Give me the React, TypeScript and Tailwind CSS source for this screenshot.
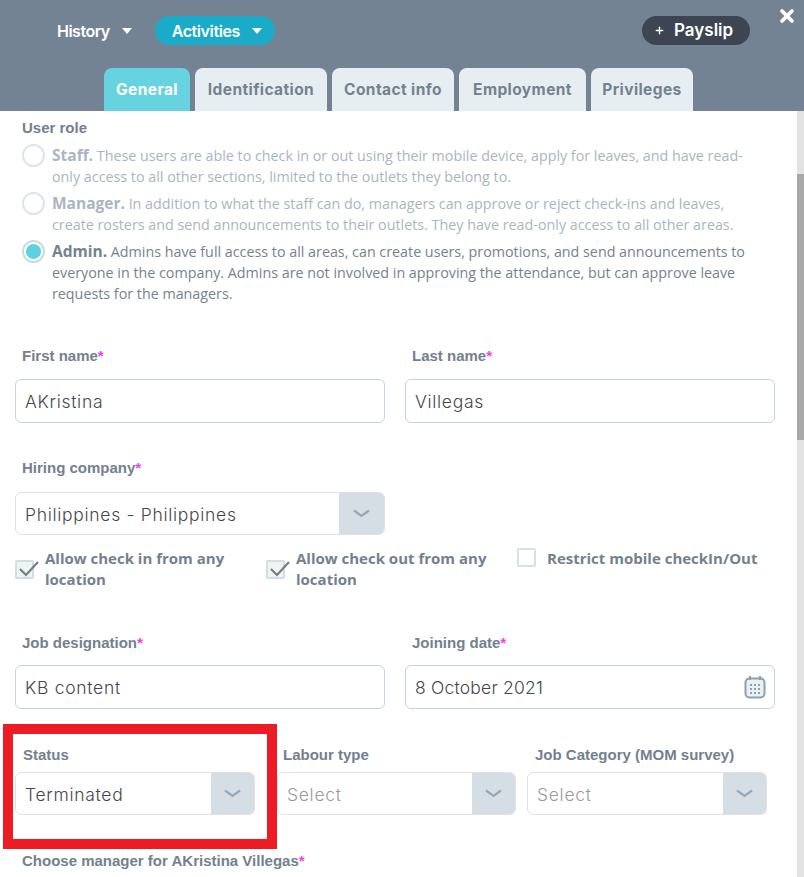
import React from 'react';
import { Plus, X } from 'lucide-react';

const display = "font-['Inter','Liberation_Sans',sans-serif]";
const label = "font-['Liberation_Sans',Arial,sans-serif] font-bold text-[15px] leading-[16px] text-[#72818f]";
const body = "font-['Open_Sans','Noto_Sans',sans-serif]";

function Req() {
  return <span className="text-[#f53df0]">*</span>;
}

function Caret() {
  return (
    <svg width="12" height="8" viewBox="0 0 12 8" className="ml-[11px]">
      <path d="M1 1h10L6 7z" fill="#fff" />
    </svg>
  );
}

function Chevron() {
  return (
    <svg width="19" height="9" viewBox="0 0 19 9">
      <path d="M2 1.5 9.5 7 17 1.5" fill="none" stroke="#96a9b6" strokeWidth="2.2" />
    </svg>
  );
}

function Tab({ name, width, active }: { name: string; width: string; active?: boolean }) {
  return (
    <div className={`${width} h-[43px] rounded-t-[8px] flex items-center justify-center ${display} font-bold text-[15.5px] tracking-[0.4px] ${active ? 'bg-[#67d2e0] text-white' : 'bg-[#e7eef1] text-[#74828f]'}`}>
      {name}
    </div>
  );
}

function Role({ title, active, children, className }: { title: string; active?: boolean; children: React.ReactNode; className?: string }) {
  return (
    <div className={`flex ${className ?? ''}`}>
      <div className={`mt-[1px] w-[23px] h-[23px] shrink-0 rounded-full border-2 flex items-center justify-center ${active ? 'border-[#c9dbe4]' : 'border-[#dbe5ea]'}`}>
        {active && <div className="w-[15px] h-[15px] rounded-full bg-[#5fd0e0]" />}
      </div>
      <p className={`ml-[7px] mt-[2px] w-[702px] ${body} text-[14.3px] leading-[21px] ${active ? 'text-[#74838f]' : 'text-[#aab5c2]'}`}>
        <b className="text-[15.5px]">{title}</b> {children}
      </p>
    </div>
  );
}

function TextInput({ value, icon, tight }: { value: string; icon?: boolean; tight?: boolean }) {
  return (
    <div className={`h-[44px] rounded-[6px] border border-[#c5d4dd] pl-[9px] pr-[8px] flex items-center justify-between ${display} font-light text-[17.5px] text-[#44484c]`}>
      <span className={`mt-[2px] ${tight ? 'tracking-[0.2px]' : 'tracking-[0.7px]'}`}>{value}</span>
      {icon && (
        <svg width="22" height="24" viewBox="0 0 22 24">
          <rect x="1.5" y="3.5" width="19" height="19" rx="4" fill="#eaf0f3" stroke="#8aa1ae" strokeWidth="2" />
          <path d="M6 1v4M16 1v4" stroke="#8aa1ae" strokeWidth="2" />
          <path d="M6 10h10M6 14h10M6 18h10" stroke="#8aa1ae" strokeWidth="2" strokeDasharray="2 2" />
        </svg>
      )}
    </div>
  );
}

function Select({ value, placeholder, arrow = 'w-[43px]' }: { value: string; placeholder?: boolean; arrow?: string }) {
  return (
    <div className={`h-[43px] rounded-[6px] border border-[#e0e2e4] pl-[9px] flex items-center justify-between overflow-hidden ${display} font-light text-[17.5px] tracking-[0.7px] ${placeholder ? 'text-[#9a9a9a]' : 'text-[#44484c]'}`}>
      <span className="mt-[3px]">{value}</span>
      <div className={`${arrow} h-full bg-[#d5dee5] flex items-center justify-center`}>
        <Chevron />
      </div>
    </div>
  );
}

function CheckItem({ checked, className, children }: { checked?: boolean; className: string; children: React.ReactNode }) {
  return (
    <div className={`flex ${className}`}>
      <div className={`relative w-[19px] h-[19px] shrink-0 border-2 rounded-[2px] ${checked ? 'mt-[12px] border-[#d0dee6] bg-[#eef3f6]' : 'border-[#d5e0e7]'}`}>
        {checked && (
          <svg width="22" height="18" viewBox="0 0 22 18" className="absolute left-[1px] top-[-2px]">
            <path d="M2 9l6 6L20 2" fill="none" stroke="#7b7b7b" strokeWidth="2.2" />
          </svg>
        )}
      </div>
      <span className={`ml-[11px] ${body} font-bold text-[15px] leading-[21px] text-[#72818f]`}>{children}</span>
    </div>
  );
}

export default function App() {
  return (
    <div className="relative w-[804px] h-[877px] overflow-hidden bg-white flex flex-col">
      <header className="h-[111px] shrink-0 bg-[#738394] relative flex flex-col justify-between">
        <div className="pt-[16px] pl-[57px] pr-[54px] flex items-center">
          <div className={`flex items-center ${display} font-semibold text-[16px] tracking-[-0.5px] text-white`}>
            History
            <Caret />
          </div>
          <div className={`ml-[22px] w-[120px] h-[29px] rounded-full bg-[#1aabc9] flex items-center pl-[17px] ${display} font-semibold text-[16px] tracking-[-0.4px] text-white`}>
            Activities
            <Caret />
          </div>
          <div className={`ml-auto w-[108px] h-[29px] rounded-full bg-[#3d4552] flex items-center pl-[12px] gap-[9px] ${display} font-semibold text-[17px] text-white`}>
            <Plus size={11} strokeWidth={3} />
            Payslip
          </div>
        </div>
        <div className="pl-[104px] flex gap-[5px]">
          <Tab name="General" width="w-[86px]" active />
          <Tab name="Identification" width="w-[132px]" />
          <Tab name="Contact info" width="w-[122px]" />
          <Tab name="Employment" width="w-[127px]" />
          <Tab name="Privileges" width="w-[102px]" />
        </div>
        <X size={20} strokeWidth={4.5} className="absolute left-[777px] top-[6px] text-white" />
      </header>

      <div className="flex-1 min-h-0 flex">
        <main className="w-[797px] pl-[15px] pr-[22px] pt-[9px]">
          <div className={`pl-[7px] ${label}`}>User role</div>
          <div className="pl-[7px]">
            <Role title="Staff." className="mt-[7px]">
              These users are able to check in or out using their mobile device, apply for leaves, and have read-only access to all other sections, limited to the outlets they belong to.
            </Role>
            <Role title="Manager." className="mt-[4px]">
              In addition to what the staff can do, managers can approve or reject check-ins and leaves, create rosters and send announcements to their outlets. They have read-only access to all other areas.
            </Role>
            <Role title="Admin." active className="mt-[4px]">
              Admins have full access to all areas, can create users, promotions, and send announcements to everyone in the company. Admins are not involved in approving the attendance, but can approve leave requests for the managers.
            </Role>
          </div>

          <div className="mt-[44px] grid grid-cols-[370px_370px] gap-x-[20px]">
            <div>
              <div className={`pl-[7px] mb-[15px] ${label}`}>First name<Req /></div>
              <TextInput value="AKristina" />
            </div>
            <div>
              <div className={`pl-[7px] mb-[15px] ${label}`}>Last name<Req /></div>
              <TextInput value="Villegas" />
            </div>
          </div>

          <div className="mt-[37px] w-[370px]">
            <div className={`pl-[7px] mb-[16px] ${label}`}>Hiring company<Req /></div>
            <Select value="Philippines - Philippines" arrow="w-[45px]" />
          </div>

          <div className="mt-[13px] flex items-start h-[42px]">
            <CheckItem checked className="w-[251px] pr-[30px]">Allow check in from any location</CheckItem>
            <CheckItem checked className="w-[251px] pr-[30px]">Allow check out from any location</CheckItem>
            <CheckItem className="w-[250px]">Restrict mobile checkIn/Out</CheckItem>
          </div>

          <div className="mt-[45px] grid grid-cols-[370px_370px] gap-x-[20px]">
            <div>
              <div className={`pl-[7px] mb-[14px] ${label}`}>Job designation<Req /></div>
              <TextInput value="KB content" />
            </div>
            <div>
              <div className={`pl-[7px] mb-[14px] ${label}`}>Joining date<Req /></div>
              <TextInput value="8 October 2021" icon tight />
            </div>
          </div>

          <div className="mt-[38px] flex">
            <div className="w-[240px]">
              <div className={`pl-[8px] mb-[9px] ${label}`}>Status</div>
              <Select value="Terminated" />
            </div>
            <div className="ml-[22px] w-[239px]">
              <div className={`pl-[6px] mb-[9px] ${label}`}>Labour type</div>
              <Select value="Select" placeholder />
            </div>
            <div className="ml-[11px] w-[240px]">
              <div className={`pl-[8px] mb-[9px] ${label}`}>Job Category (MOM survey)</div>
              <Select value="Select" placeholder />
            </div>
          </div>

          <div className={`mt-[38px] pl-[7px] ${label}`}>Choose manager for AKristina Villegas<Req /></div>
        </main>
        <div className="w-[7px] bg-[#e3e3e3] pt-[63px]">
          <div className="h-[266px] bg-[#a8a8a8]" />
        </div>
      </div>

      <div className="absolute left-[3px] top-[724px] w-[274px] h-[125px] border-[10px] border-[#ed1c24]" />
    </div>
  );
}
